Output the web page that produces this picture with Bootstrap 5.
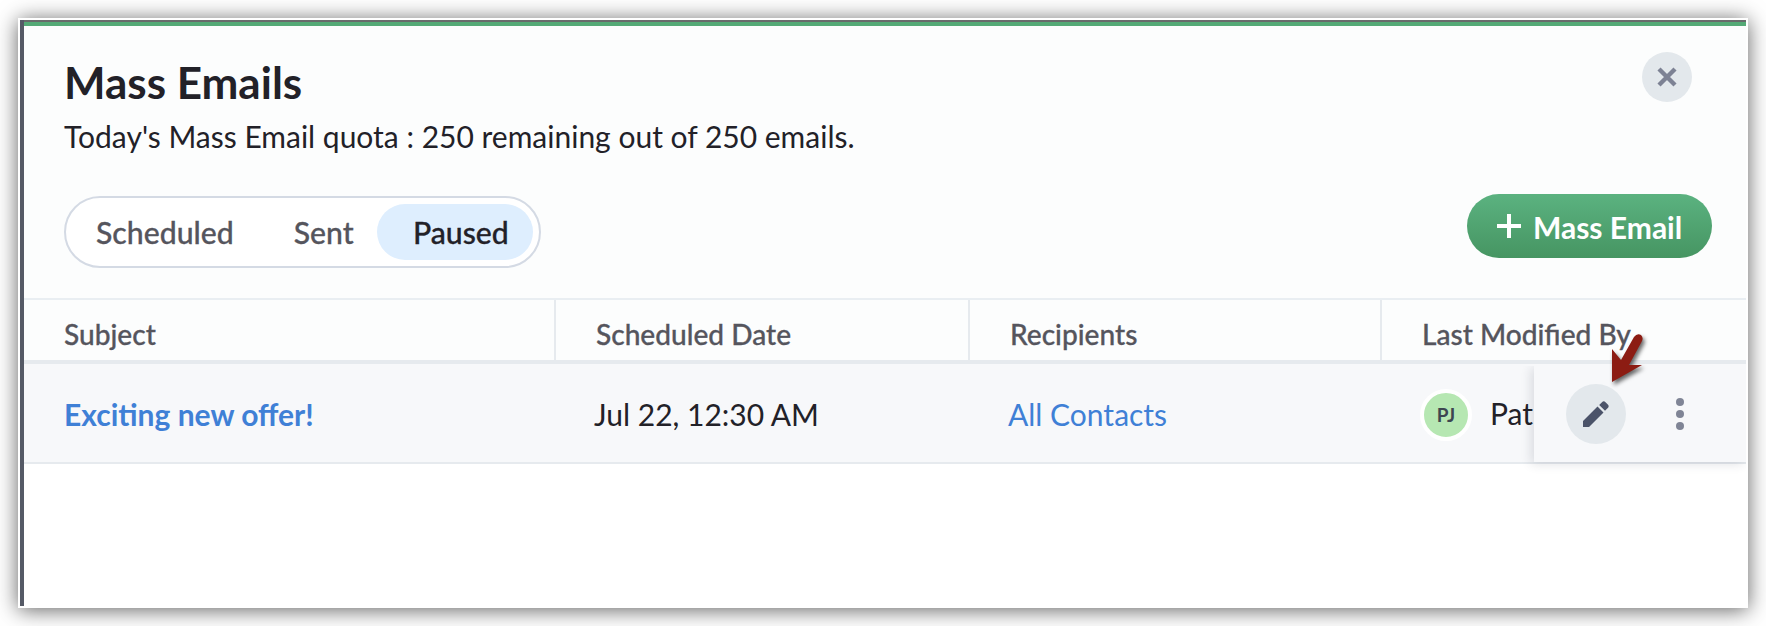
<!DOCTYPE html>
<html lang="en">
<head>
<meta charset="utf-8">
<title>Mass Emails</title>
<meta name="viewport" content="width=device-width, initial-scale=1">
<link href="https://cdn.jsdelivr.net/npm/bootstrap@5.3.0/dist/css/bootstrap.min.css" rel="stylesheet">
<style>
body{font-family:Lato,sans-serif;color:#222128;background:#fff;height:626px;overflow:hidden;padding:18px;font-size:30px;line-height:36px}
.frame{width:1730px;height:590px;border:2px solid #fff;background:#555a66;box-shadow:0 2px 20px rgba(0,0,0,.62)}
.panel{height:586px;padding-top:2px;background:#fff;margin-left:4px;box-shadow:inset 0 2px #686b6b,inset 0 6px #54aa76}
.sheet{margin-top:4px;background:#fcfdfd}
.top-area{height:274px;padding:26px 34px 0 40px;border-bottom:2px solid #e9eef2}
h1{font-size:44px;line-height:52px;font-weight:700;margin:4px 0 0}
.quota{margin-top:10px;white-space:nowrap}
.round-btn{border:0;border-radius:50%;background:#e3e8ec;padding:0}
.close-btn{width:50px;height:50px;margin-right:20px}
.actions{margin-top:42px}
.tabs{width:477px;height:72px;border:2px solid #d4dae4;border-radius:36px;background:#fff;padding:6px;font-size:30.2px;font-weight:500;color:#55555d;-webkit-text-stroke:.3px}
.tab-a{margin-left:24px}
.tab-b{margin-left:60px}
.tab-on{width:156px;height:56px;border-radius:28px;background:#deeefe;color:#222128;padding-left:36px}
.add-btn{width:245px;height:64px;border:0;border-radius:32px;color:#fff;background:linear-gradient(#5bb280,#469562);font-weight:700;padding:0 0 0 30px;gap:12px;margin-top:-2px}
.add-label{padding-top:2px}
.grid-row{display:grid;grid-template-columns:530px 414px 412px 366px}
.heads{grid-template-columns:532px 414px 412px 364px;height:64px;border-bottom:4px solid #e6eaee;font-size:28.1px;font-weight:500;color:#55555d;-webkit-text-stroke:.3px}
.heads>div{border-right:2px solid #e6eaee;padding:16px 0 0 40px}
.heads>div:last-child{border:0}
.mail{height:100px;border-bottom:2px solid #e6eaee;background:#f7f8fa;align-items:center}
.mail>div{padding:2px 0 0 40px}
.mail>.owner-cell{padding-top:4px}
.mail a{color:#3f80d6;text-decoration:none}
.avatar{width:52px;height:52px;border-radius:50%;border:4px solid #fff;background:#b6e7b2;font-size:19px;font-weight:700;color:#3d4650}
.owner{margin:-5px 0 0 18px}
.tools{left:1510px;top:346px;width:212px;height:96px;background:#f7f8fa;box-shadow:-3px 2px 10px rgba(40,50,70,.14);clip-path:inset(0 0 -14px -20px)}
.edit-btn{width:60px;height:60px;margin-left:32px}
.pointer{left:1576px;top:306px}
.pointer path{filter:drop-shadow(2px 3px 2px rgba(0,0,0,.6))}
</style>
</head>
<body>
<main class="frame">
<div class="panel position-relative">
 <div class="sheet">
  <header class="top-area">
   <div class="d-flex justify-content-between">
    <div><h1>Mass Emails</h1><div class="quota">Today's Mass Email quota : 250 remaining out of 250 emails.</div></div>
    <button class="round-btn close-btn d-flex align-items-center justify-content-center" aria-label="Close"><svg width="20" height="20" viewBox="0 0 20 20" stroke="#7d8294" stroke-width="4.4"><path d="M2 2 18 18M18 2 2 18"/></svg></button>
   </div>
   <div class="actions d-flex justify-content-between align-items-start">
    <nav class="tabs d-flex align-items-center"><span class="tab-a">Scheduled</span><span class="tab-b">Sent</span><span class="tab-on d-flex align-items-center ms-auto">Paused</span></nav>
    <button class="add-btn d-flex align-items-center"><svg width="24" height="24" stroke="#fff" stroke-width="4"><path d="M12 0V24M0 12H24"/></svg><span class="add-label">Mass Email</span></button>
   </div>
  </header>
  <div class="grid-row heads"><div>Subject</div><div>Scheduled Date</div><div>Recipients</div><div>Last Modified By</div></div>
 </div>
 <div class="grid-row mail">
  <div><a href="#" class="fw-bold">Exciting new offer!</a></div><div>Jul 22, 12:30 AM</div><div><a href="#">All Contacts</a></div>
  <div class="owner-cell d-flex align-items-center"><span class="avatar d-flex align-items-center justify-content-center">PJ</span><span class="owner">Pat</span></div>
 </div>
 <div class="tools position-absolute d-flex align-items-center">
  <button class="round-btn edit-btn d-flex align-items-center justify-content-center" aria-label="Edit"><svg width="26" height="26" viewBox="0 0 26 26" fill="#4b5369"><path d="M0 20 14.500 5.500 20.500 11.500 6 26H0ZM16.200 4 19 1.200Q20.700-.5 22.500 1.200L24.800 3.500Q26.500 5.200 24.800 7L22 9.800Z"/></svg></button>
  <svg class="ms-auto me-5" width="36" height="40" fill="#808596"><circle cx="18" cy="8" r="4"/><circle cx="18" cy="20" r="4"/><circle cx="18" cy="32" r="4"/></svg>
 </div>
 <svg class="pointer position-absolute" width="60" height="70" viewBox="1600 326 60 70"><path d="M1612 382V349L1621 360 1634 337Q1637 333 1641 335 1644 338 1641.500 342L1629 365H1642Z" fill="#8c1c13"/></svg>
</div>
</main>
<script src="https://cdn.jsdelivr.net/npm/bootstrap@5.3.0/dist/js/bootstrap.bundle.min.js"></script>
</body>
</html>
